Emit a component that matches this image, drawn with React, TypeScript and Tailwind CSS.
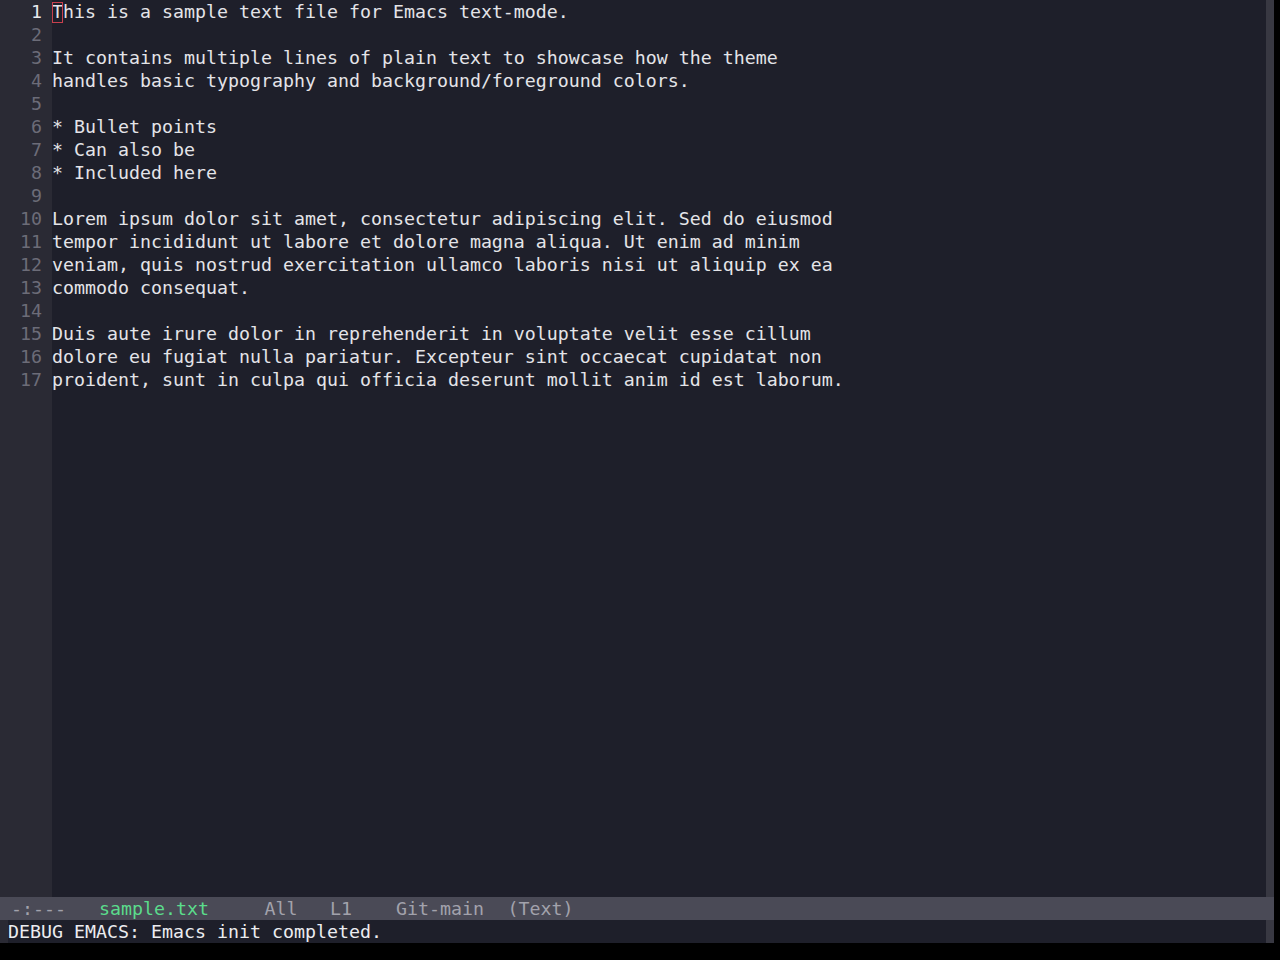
import React from "react";

const lines: string[] = [
  "This is a sample text file for Emacs text-mode.",
  "",
  "It contains multiple lines of plain text to showcase how the theme",
  "handles basic typography and background/foreground colors.",
  "",
  "* Bullet points",
  "* Can also be",
  "* Included here",
  "",
  "Lorem ipsum dolor sit amet, consectetur adipiscing elit. Sed do eiusmod",
  "tempor incididunt ut labore et dolore magna aliqua. Ut enim ad minim",
  "veniam, quis nostrud exercitation ullamco laboris nisi ut aliquip ex ea",
  "commodo consequat.",
  "",
  "Duis aute irure dolor in reprehenderit in voluptate velit esse cillum",
  "dolore eu fugiat nulla pariatur. Excepteur sint occaecat cupidatat non",
  "proident, sunt in culpa qui officia deserunt mollit anim id est laborum.",
];

const mono = { fontFamily: '"DejaVu Sans Mono", "Liberation Mono", monospace' };

export default function App() {
  return (
    <div className="w-[1280px] h-[960px] bg-black overflow-hidden" style={mono}>
      <div className="w-[1274px] h-[943px] flex flex-col text-[18.27px] leading-[23px]">
        <div className="flex flex-1 min-h-0">
          <div className="w-[52px] bg-[#2a2a34] flex flex-col items-end pr-[10px]">
            {lines.map((_, i) => (
              <div
                key={i}
                className={i === 0 ? "h-[23px] text-[#e8e8ec]" : "h-[23px] text-[#6c6c78]"}
              >
                {i + 1}
              </div>
            ))}
          </div>
          <div className="flex-1 bg-[#1e1f2a] text-[#e4e4e8] whitespace-pre">
            {lines.map((l, i) => (
              <div key={i} className="h-[23px]">
                {i === 0 ? (
                  <>
                    <span className="relative">
                      <span className="absolute left-0 top-[1px] w-[11px] h-[21px] border border-[#c8404e]"></span>
                      {l[0]}
                    </span>
                    {l.slice(1)}
                  </>
                ) : (
                  l
                )}
              </div>
            ))}
          </div>
          <div className="w-[8px] bg-[#383842]"></div>
        </div>
        <div className="h-[23px] bg-[#4a4a56] flex items-center whitespace-pre text-[#a2a2ac]">
          <span className="ml-[11px]">-:---</span>
          <span className="ml-[33px] text-[#5bdc8c]">sample.txt</span>
          <span className="ml-[55.5px]">All</span>
          <span className="ml-[32.5px]">L1</span>
          <span className="ml-[44px]">Git-main</span>
          <span className="ml-[23.5px]">(Text)</span>
        </div>
        <div className="h-[23px] flex">
          <div className="w-[8px] bg-[#2a2a34]"></div>
          <div className="flex-1 bg-[#1e1f2a] text-[#ececf0] whitespace-pre">DEBUG EMACS: Emacs init completed.</div>
          <div className="w-[8px] bg-[#383842]"></div>
        </div>
      </div>
    </div>
  );
}
